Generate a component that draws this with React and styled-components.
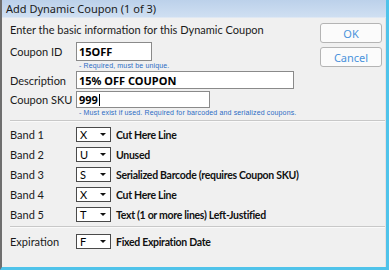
import React from 'react';
import styled, { createGlobalStyle } from 'styled-components';

const GlobalStyle = createGlobalStyle`
    body {
        margin: 0;
        background: #f0f0f0;
    }
`

const Window = styled.div`
    width: 389px;
    height: 270px;
    box-sizing: border-box;
    display: flex;
    flex-direction: column;
    background: #f0f0f0;
    border-left: 2px solid #6f6f6f;
    border-right: 3px solid #4fc3ea;
    border-bottom: 3px solid #4fc3ea;
    font-family: Lato, "Noto Sans", sans-serif;
    font-size: 11px;
    color: #1a1a1a;
    overflow: hidden;
`

const TitleBar = styled.div`
    height: 17px;
    flex-shrink: 0;
    display: flex;
    align-items: center;
    padding-left: 4px;
    background: linear-gradient(#bcd1ea, #cfdff2);
    border-bottom: 1px solid #dfe8f3;
    font-family: "Noto Sans", sans-serif;
    font-size: 11px;
    color: #1a1a1a;
`

const Body = styled.div`
    flex: 1;
    padding: 3px 3px 0 8px;
    border-right: 1px solid #e8e0e0;
`

const Top = styled.div`
    display: flex;
    justify-content: space-between;
`

const Form = styled.div`
    display: flex;
    flex-direction: column;
`

const Intro = styled.div`
    height: 17px;
    line-height: 17px;
    margin-bottom: 4px;
`

const Row = styled.div`
    display: flex;
    align-items: center;
    height: ${p => p.$h || 18}px;
    margin-top: ${p => p.$mt || 0}px;
`

const Label = styled.div`
    width: 66px;
    flex-shrink: 0;
`

const Input = styled.div`
    width: ${p => p.$w}px;
    height: 100%;
    box-sizing: border-box;
    background: #fff;
    border: 1px solid #8a8a8a;
    padding-left: 2px;
    display: flex;
    align-items: center;
    font-family: "Noto Sans", sans-serif;
    font-size: 11px;
    font-weight: bold;
    color: #000;
`

const Caret = styled.span`
    display: inline-block;
    width: 1px;
    height: 12px;
    background: #000;
    margin-left: 1px;
`

const Hint = styled.div`
    margin-left: 69px;
    height: 10px;
    line-height: 10px;
    font-family: "Liberation Sans", Arial, sans-serif;
    font-size: 7px;
    letter-spacing: 0.15px;
    color: #2c6cc4;
`

const Buttons = styled.div`
    display: flex;
    flex-direction: column;
    gap: 4px;
    padding-top: 2px;
`

const Button = styled.div`
    width: 62px;
    height: 20px;
    box-sizing: border-box;
    background: #fbfbfb;
    border: 1px solid #b4b4b4;
    border-radius: 3px;
    display: flex;
    align-items: center;
    justify-content: center;
    font-family: "Noto Sans", sans-serif;
    font-size: 11px;
    color: #4a93dc;
`

const Separator = styled.div`
    height: 0;
    border-top: 1px solid #c8c8c8;
    border-bottom: 1px solid #fafafa;
    margin: ${p => p.$m};
    width: 375px;
`

const Band = styled.div`
    display: flex;
    align-items: center;
    height: 15px;
    margin-bottom: ${p => p.$mb || 5}px;
`

const Select = styled.div`
    width: 35px;
    height: 15px;
    box-sizing: border-box;
    background: #fff;
    border: 1px solid #4a4a4a;
    display: flex;
    align-items: center;
    justify-content: space-between;
    padding: 0 4px 0 3px;
    margin-right: 5px;
    color: #000;
`

const Arrow = styled.span`
    width: 0;
    height: 0;
    border-left: 3px solid transparent;
    border-right: 3px solid transparent;
    border-top: 3px solid #111;
`

const Desc = styled.div`
    font-size: 10.5px;
    letter-spacing: -0.3px;
    font-weight: bold;
    color: #111;
`

const bands = [
    ['Band 1', 'X', 'Cut Here Line'],
    ['Band 2', 'U', 'Unused'],
    ['Band 3', 'S', 'Serialized Barcode (requires Coupon SKU)'],
    ['Band 4', 'X', 'Cut Here Line'],
    ['Band 5', 'T', 'Text (1 or more lines) Left-Justified'],
]

function BandRow({ label, code, text, mb }) {
    return (
        <Band $mb={mb}>
            <Label>{label}</Label>
            <Select>{code}<Arrow /></Select>
            <Desc>{text}</Desc>
        </Band>
    )
}

export default function App() {
    return (
        <>
            <GlobalStyle />
            <Window>
                <TitleBar>Add Dynamic Coupon (1 of 3)</TitleBar>
                <Body>
                    <Top>
                        <Form>
                            <Intro>Enter the basic information for this Dynamic Coupon</Intro>
                            <Row $h={19}>
                                <Label>Coupon ID</Label>
                                <Input $w={76}>15OFF</Input>
                            </Row>
                            <Hint>- Required, must be unique.</Hint>
                            <Row>
                                <Label>Description</Label>
                                <Input $w={218}>15% OFF COUPON</Input>
                            </Row>
                            <Row $h={17} $mt={2}>
                                <Label>Coupon SKU</Label>
                                <Input $w={134}>999<Caret /></Input>
                            </Row>
                            <Hint>- Must exist if used. Required for barcoded and serialized coupons.</Hint>
                        </Form>
                        <Buttons>
                            <Button>OK</Button>
                            <Button>Cancel</Button>
                        </Buttons>
                    </Top>
                    <Separator $m="2px 0 5px 0" />
                    {bands.map((b, i) => (
                        <BandRow key={i} label={b[0]} code={b[1]} text={b[2]} mb={i === 4 ? 4 : 5} />
                    ))}
                    <Separator $m="0 0 6px 0" />
                    <BandRow label="Expiration" code="F" text="Fixed Expiration Date" mb={0} />
                </Body>
            </Window>
        </>
    )
}
